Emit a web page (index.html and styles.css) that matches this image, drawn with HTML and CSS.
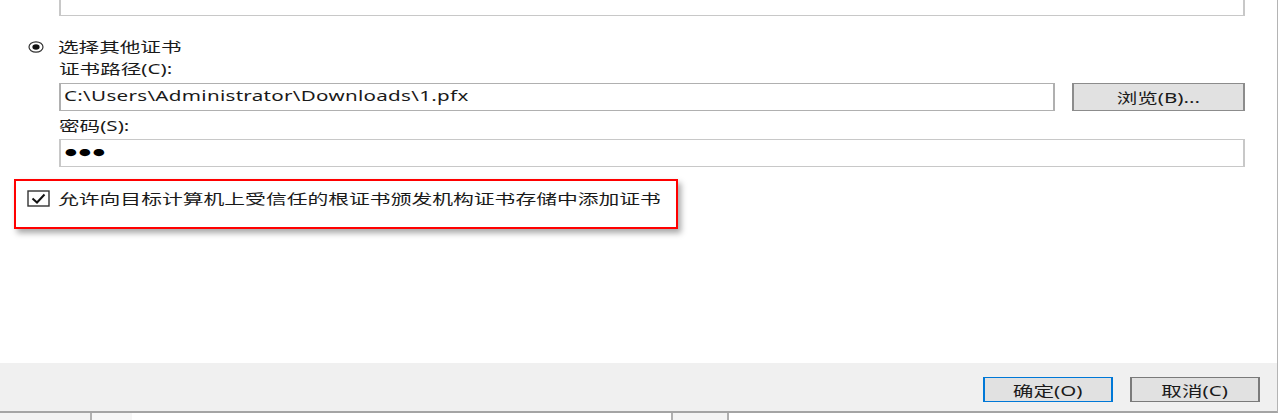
FILE: index.html
```html
<!DOCTYPE html>
<html lang="zh-CN">
<head>
  <meta charset="UTF-8" />
  <title>选择其他证书</title>
  <link rel="stylesheet" href="styles.css">
</head>
<body>

  <div class="dialog">
    <div class="content">
      <div class="box top-box indent"></div>

      <div class="radio-row">
        <svg class="radio" width="16" height="12" viewBox="0 0 16 12">
          <ellipse cx="8" cy="6" rx="7" ry="5.2" fill="#fff" stroke="#333" stroke-width="1.2"/>
          <ellipse cx="8" cy="6" rx="3.6" ry="2.7" fill="#111"/>
        </svg>
        <span class="sx">选择其他证书</span>
      </div>

      <div class="label indent"><span class="sx">证书路径(C):</span></div>
      <div class="path-row indent">
        <div class="box path-input"><span class="sx path-text">C:\Users\Administrator\Downloads\1.pfx</span></div>
        <div class="btn browse"><span class="sx mid">浏览(B)...</span></div>
      </div>

      <div class="label label-pwd indent"><span class="sx">密码(S):</span></div>
      <div class="box pwd-input indent"><span class="sx dots">●●●</span></div>

      <div class="highlight">
        <svg class="check" width="23" height="17" viewBox="0 0 23 17">
          <rect x="1" y="1" width="21" height="15" fill="#fff" stroke="#333" stroke-width="1.4"/>
          <path d="M5.5 8.5 L10 12.5 L17.5 4.5" fill="none" stroke="#111" stroke-width="2"/>
        </svg>
        <span class="sx wide">允许向目标计算机上受信任的根证书颁发机构证书存储中添加证书</span>
      </div>
    </div>

    <div class="footer">
      <div class="btn ok"><span class="sx mid">确定(O)</span></div>
      <div class="btn cancel"><span class="sx mid">取消(C)</span></div>
    </div>
  </div>

  <div class="taskbar">
    <div class="seg seg-a"></div>
    <div class="seg seg-b"></div>
    <div class="seg seg-gap"></div>
    <div class="seg seg-c"></div>
    <div class="seg seg-rest"></div>
  </div>

</body>
</html>
```

FILE: styles.css
```css
body {
  margin: 0;
  background: #fff;
  font-family: "Noto Sans", "Noto Sans CJK SC", sans-serif;
  font-size: 14px;
  color: #1a1a1a;
}
.dialog {
  width: 1278px;
  height: 413px;
  box-sizing: border-box;
  border-right: 1px solid #b4b4b4;
  border-bottom: 2px solid #a4a4a4;
  display: flex;
  flex-direction: column;
}
.content {
  height: 363px;
}
.sx {
  display: inline-block;
  white-space: nowrap;
  transform: scaleX(1.47);
  transform-origin: 0 50%;
}
.sx.mid {
  transform-origin: 50% 50%;
}
.sx.wide {
  transform: scaleX(1.485);
}
.indent {
  margin-left: 59px;
  margin-right: 32px;
}
.box {
  box-sizing: border-box;
  background: #fff;
  border-style: solid;
  border-width: 1px 2px;
  border-color: #c8c8c8;
}
.top-box {
  height: 16px;
  border-top: none;
}
.radio-row {
  display: flex;
  align-items: center;
  gap: 14px;
  margin: 22px 0 0 28px;
  height: 18px;
  line-height: 18px;
}
.label {
  margin-top: 4px;
  height: 18px;
  line-height: 18px;
}
.path-row {
  display: flex;
  gap: 17px;
  margin-top: 5px;
  height: 28px;
}
.path-input {
  flex: 1;
  border-color: #b0b0b0;
  padding-left: 3px;
  line-height: 24px;
}
.path-text {
  letter-spacing: 0.2px;
}
.btn {
  box-sizing: border-box;
  background: #e1e1e1;
  border-style: solid;
  border-width: 1px 2px;
  border-color: #8c8c8c;
  display: flex;
  align-items: center;
  justify-content: center;
}
.browse {
  width: 173px;
}
.label-pwd {
  margin-top: 6px;
}
.pwd-input {
  margin-top: 4px;
  height: 28px;
  padding-left: 4px;
  line-height: 22px;
}
.dots {
  font-size: 8px;
  letter-spacing: 1.5px;
  color: #000;
}
.highlight {
  box-sizing: border-box;
  width: 664px;
  height: 50px;
  margin: 12px 0 0 14px;
  border: 2px solid #f00;
  box-shadow: 3px 4px 6px rgba(0, 0, 0, 0.35);
  display: flex;
  align-items: flex-start;
  gap: 8px;
  padding: 9px 0 0 11px;
  line-height: 18px;
}
.footer {
  flex: 1;
  background: #f0f0f0;
  display: flex;
  justify-content: flex-end;
  align-items: flex-start;
  gap: 17px;
  padding: 14px 17px 0 0;
}
.footer .btn {
  width: 130px;
  height: 25px;
}
.ok {
  border-color: #0078d7;
}
.cancel {
  border-color: #7a7a7a;
}
.taskbar {
  display: flex;
  height: 7px;
}
.seg-a {
  width: 90px;
  background: #f2f2f2;
  border-right: 2px solid #b0b0b0;
}
.seg-b {
  width: 40px;
  background: #f6f6f6;
}
.seg-gap {
  width: 539px;
  border-right: 2px solid #b0b0b0;
}
.seg-c {
  width: 54px;
  background: #f4f4f4;
  border-right: 2px solid #b0b0b0;
}
.seg-rest {
  flex: 1;
}
```
